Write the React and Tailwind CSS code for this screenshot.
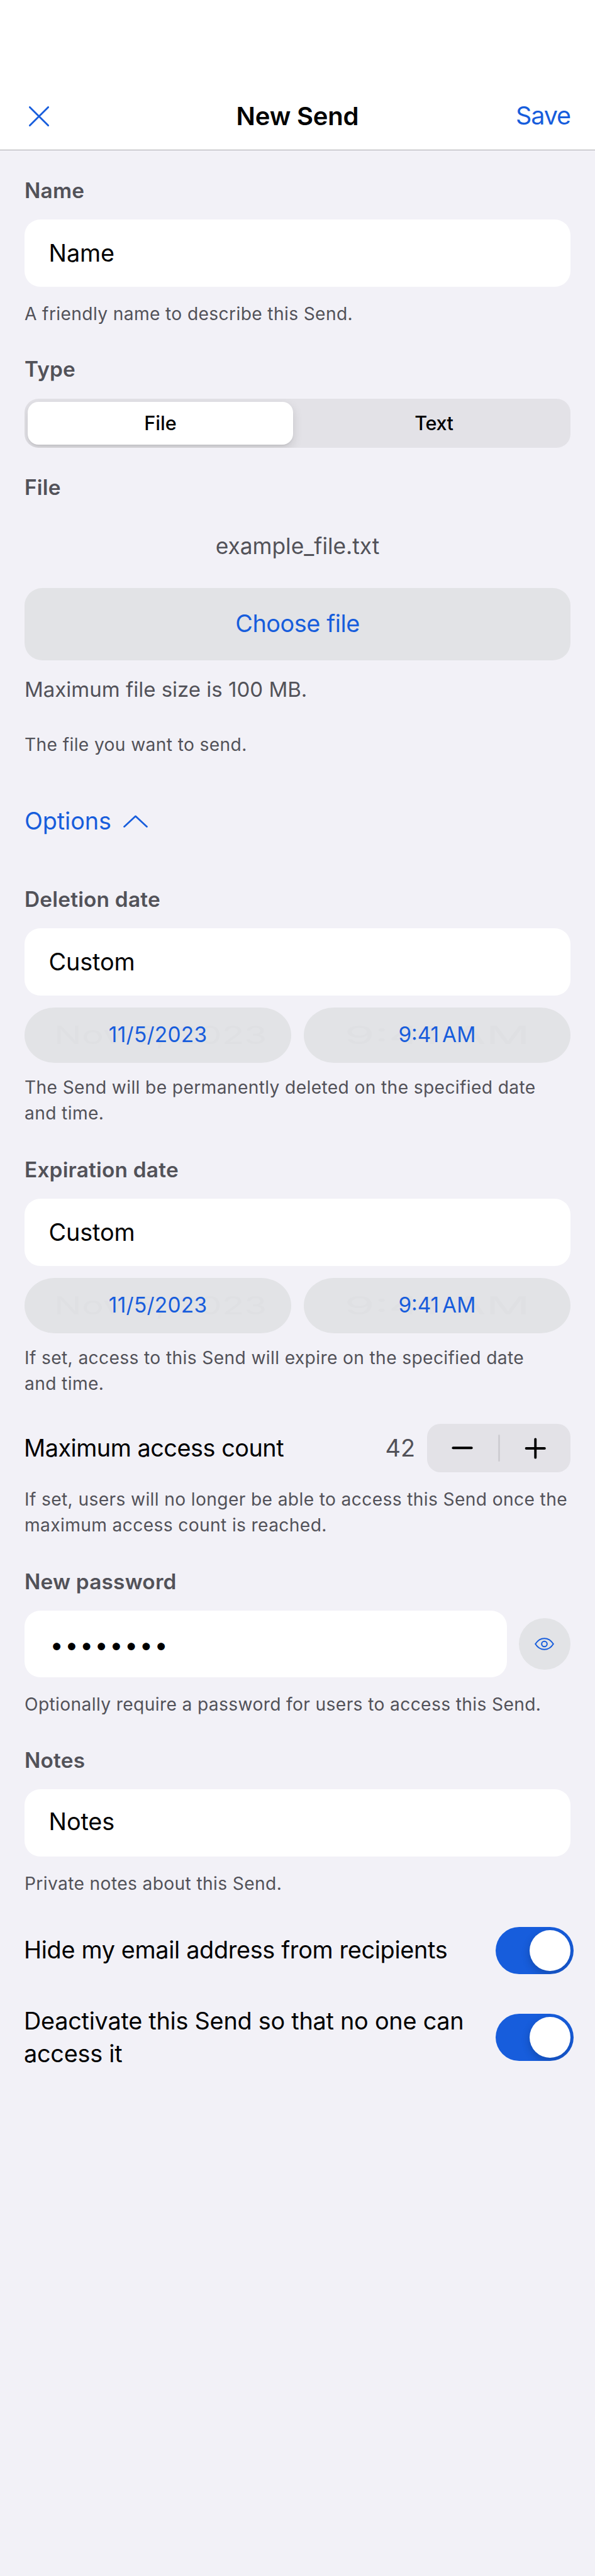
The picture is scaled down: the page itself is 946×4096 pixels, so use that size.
import React from "react";

function Label({ className = "", children }) {
  return (
    <h2 className={`text-[33.4px] leading-[40px] font-semibold tracking-[0.2px] text-[#525259] ${className}`}>
      {children}
    </h2>
  );
}

function Hint({ className = "", children }) {
  return (
    <p className={`text-[28.2px] leading-[41.25px] tracking-[0.36px] whitespace-nowrap text-[#525259] ${className}`}>
      {children}
    </p>
  );
}

function Field({ className = "pt-px", children }) {
  return (
    <div className={`flex h-[106.8px] items-center rounded-[25px] bg-white pl-[38.5px] text-[37.8px] leading-none tracking-[-0.1px] text-black ${className}`}>
      {children}
    </div>
  );
}

function Pill({ ghost, ghostClass, children }) {
  return (
    <div className="relative flex h-[87.4px] items-center justify-center overflow-hidden rounded-[48px/43.7px] bg-[#e2e3e6]">
      <span className={`absolute inset-0 flex items-center justify-center text-[40px] whitespace-nowrap text-[#dfe0e3] ${ghostClass}`}>
        {ghost}
      </span>
      <span className="relative text-[33.4px] leading-none text-[#175ddc]">{children}</span>
    </div>
  );
}

function DatePills() {
  return (
    <div className="mt-[19.3px] grid grid-cols-2 gap-[19.4px]">
      <Pill ghost="Nov 5, 2023" ghostClass="translate-x-[4px] scale-x-[1.46]">
        <span className="tracking-[0.3px]">11/5/2023</span>
      </Pill>
      <Pill ghost="9:41 AM" ghostClass="scale-x-[1.93]">
        <span className="tracking-[0px] [word-spacing:-4.5px]">9:41 AM</span>
      </Pill>
    </div>
  );
}

function Toggle() {
  return (
    <div className="-mr-[5px] flex h-[75.2px] w-[123.7px] shrink-0 items-center justify-end overflow-hidden rounded-full bg-[#175ddc] pr-[4.9px]">
      <span className="size-[65.5px] rounded-full bg-white shadow-[0_5px_14px_rgba(0,0,0,0.2)]" />
    </div>
  );
}

export default function App() {
  return (
    <div className="h-[4096px] w-[946px] overflow-hidden bg-[#f2f1f7] font-['Inter',sans-serif]">
      <header className="h-[239px] border-b border-[#a9a9ad] bg-white pt-[130px]">
        <div className="grid h-[109px] grid-cols-[1fr_auto_1fr] items-center px-[39px]">
          <svg className="ml-[7px] size-[32px]" viewBox="0 0 32 32" fill="none" stroke="#175ddc" strokeWidth="2.8" strokeLinecap="round">
            <path d="M1.4 1.4 30.6 30.6M30.6 1.4 1.4 30.6" />
          </svg>
          <h1 className="text-[40px] leading-none font-semibold tracking-[-0.17px] text-black">New Send</h1>
          <button className="justify-self-end text-[39.5px] leading-none tracking-[-1.1px] text-[#175ddc]">Save</button>
        </div>
      </header>

      <main className="px-[39px]">
        <Label className="mt-[44.3px]">Name</Label>
        <Field className="mt-[26.1px] pt-px">Name</Field>
        <Hint className="mt-[22.7px]">A friendly name to describe this Send.</Hint>

        <Label className="mt-[47px]">Type</Label>
        <div className="mt-[26.9px] grid h-[77.7px] grid-cols-2 overflow-hidden rounded-[22px] bg-[#e3e2e7] text-[30.6px] leading-none font-medium text-black">
          <div className="p-[4.85px] pr-[7px]">
            <div className="flex h-full items-center justify-center rounded-[17px] bg-white shadow-[0_6px_16px_rgba(0,0,0,0.13),0_2px_2px_rgba(0,0,0,0.05)]">File</div>
          </div>
          <div className="flex items-center justify-center tracking-[-0.4px]">Text</div>
        </div>

        <Label className="mt-[43.1px]">File</Label>
        <p className="mt-[51px] text-center text-[35.3px] leading-[46px] text-[#525259]">example_file.txt</p>
        <button className="mt-[43.1px] flex h-[114.9px] w-full items-center justify-center rounded-[28px] bg-[#e2e3e6] text-[37.8px] leading-none tracking-[-0.43px] text-[#175ddc]">
          Choose file
        </button>
        <p className="mt-[26.2px] text-[33px] leading-[40px] text-[#525259]">Maximum file size is 100 MB.</p>
        <Hint className="mt-[48.5px]">The file you want to send.</Hint>

        <div className="mt-[77.25px] flex h-[46px] items-center gap-[19px] text-[37.8px] leading-none tracking-[-0.1px] text-[#175ddc]">
          <span>Options</span>
          <svg className="h-[20px] w-[39px]" viewBox="0 0 39 20" fill="none" stroke="#175ddc" strokeWidth="2.7" strokeLinecap="round" strokeLinejoin="round">
            <path d="M1.5 18.4 19.5 1.8 37.5 18.4" />
          </svg>
        </div>

        <Label className="mt-[80.9px]">Deletion date</Label>
        <Field className="mt-[26.2px] pt-px">Custom</Field>
        <DatePills />
        <Hint className="mt-[19.2px]">
          The Send will be permanently deleted on the specified date
          <br />
          and time.
        </Hint>

        <Label className="mt-[48.5px]">Expiration date</Label>
        <Field className="mt-[26.6px] pt-px">Custom</Field>
        <DatePills />
        <Hint className="mt-[19.2px]">
          If set, access to this Send will expire on the specified date
          <br />
          and time.
        </Hint>

        <div className="mt-[42.3px] flex h-[77.65px] items-center text-[37.8px] leading-none">
          <span className="-ml-px flex-1 tracking-[-0.48px] text-black">Maximum access count</span>
          <span className="mr-[19px] text-[#525259]">42</span>
          <div className="flex h-full w-[228px] items-center rounded-[21px] bg-[#e3e2e7]">
            <svg className="h-[34px] flex-1" viewBox="0 0 113 34" fill="none" stroke="#000" strokeWidth="3.9" strokeLinecap="round">
              <path d="M41.6 16.3H71" />
            </svg>
            <span className="h-[43.7px] w-[3px] rounded-full bg-[#cfced3]" />
            <svg className="h-[34px] flex-1" viewBox="0 0 113 34" fill="none" stroke="#000" strokeWidth="3.9" strokeLinecap="round">
              <path d="M41.8 17H71.2M56.5 2.3V31.7" />
            </svg>
          </div>
        </div>
        <Hint className="mt-[22.5px]">
          If set, users will no longer be able to access this Send once the
          <br />
          maximum access count is reached.
        </Hint>

        <Label className="mt-[48.1px]">New password</Label>
        <div className="mt-[26.1px] flex items-center justify-between">
          <Field className="w-[766.5px] pt-[4px]">
            <span className="ml-[2px] tracking-[2.44px]">••••••••</span>
          </Field>
          <div className="flex size-[82.5px] items-center justify-center rounded-full bg-[#e2e3e6]">
            <svg className="h-[20px] w-[31px]" viewBox="0 0 31 20" fill="none" stroke="#175ddc" strokeWidth="2" strokeLinejoin="round">
              <path d="M1.2 10C4.6 4.7 9.6 1.2 15.5 1.2S26.4 4.7 29.8 10C26.4 15.3 21.4 18.8 15.5 18.8S4.6 15.3 1.2 10Z" />
              <circle cx="15.5" cy="10" r="4.3" />
            </svg>
          </div>
        </div>
        <Hint className="mt-[22.7px]">Optionally require a password for users to access this Send.</Hint>

        <Label className="mt-[47.9px]">Notes</Label>
        <Field className="mt-[26.1px] pb-[4px]">Notes</Field>
        <Hint className="mt-[22.5px]">Private notes about this Send.</Hint>

        <div className="mt-[47.9px] flex h-[75.2px] items-center justify-between text-[37.8px] leading-none tracking-[-0.33px] text-black">
          <span className="-ml-px">Hide my email address from recipients</span>
          <Toggle />
        </div>
        <div className="mt-[48.2px] flex items-center justify-between text-[37.8px] leading-[52.3px] tracking-[-0.24px] text-black">
          <span className="-ml-px">
            Deactivate this Send so that no one can
            <br />
            access it
          </span>
          <Toggle />
        </div>
      </main>
    </div>
  );
}
